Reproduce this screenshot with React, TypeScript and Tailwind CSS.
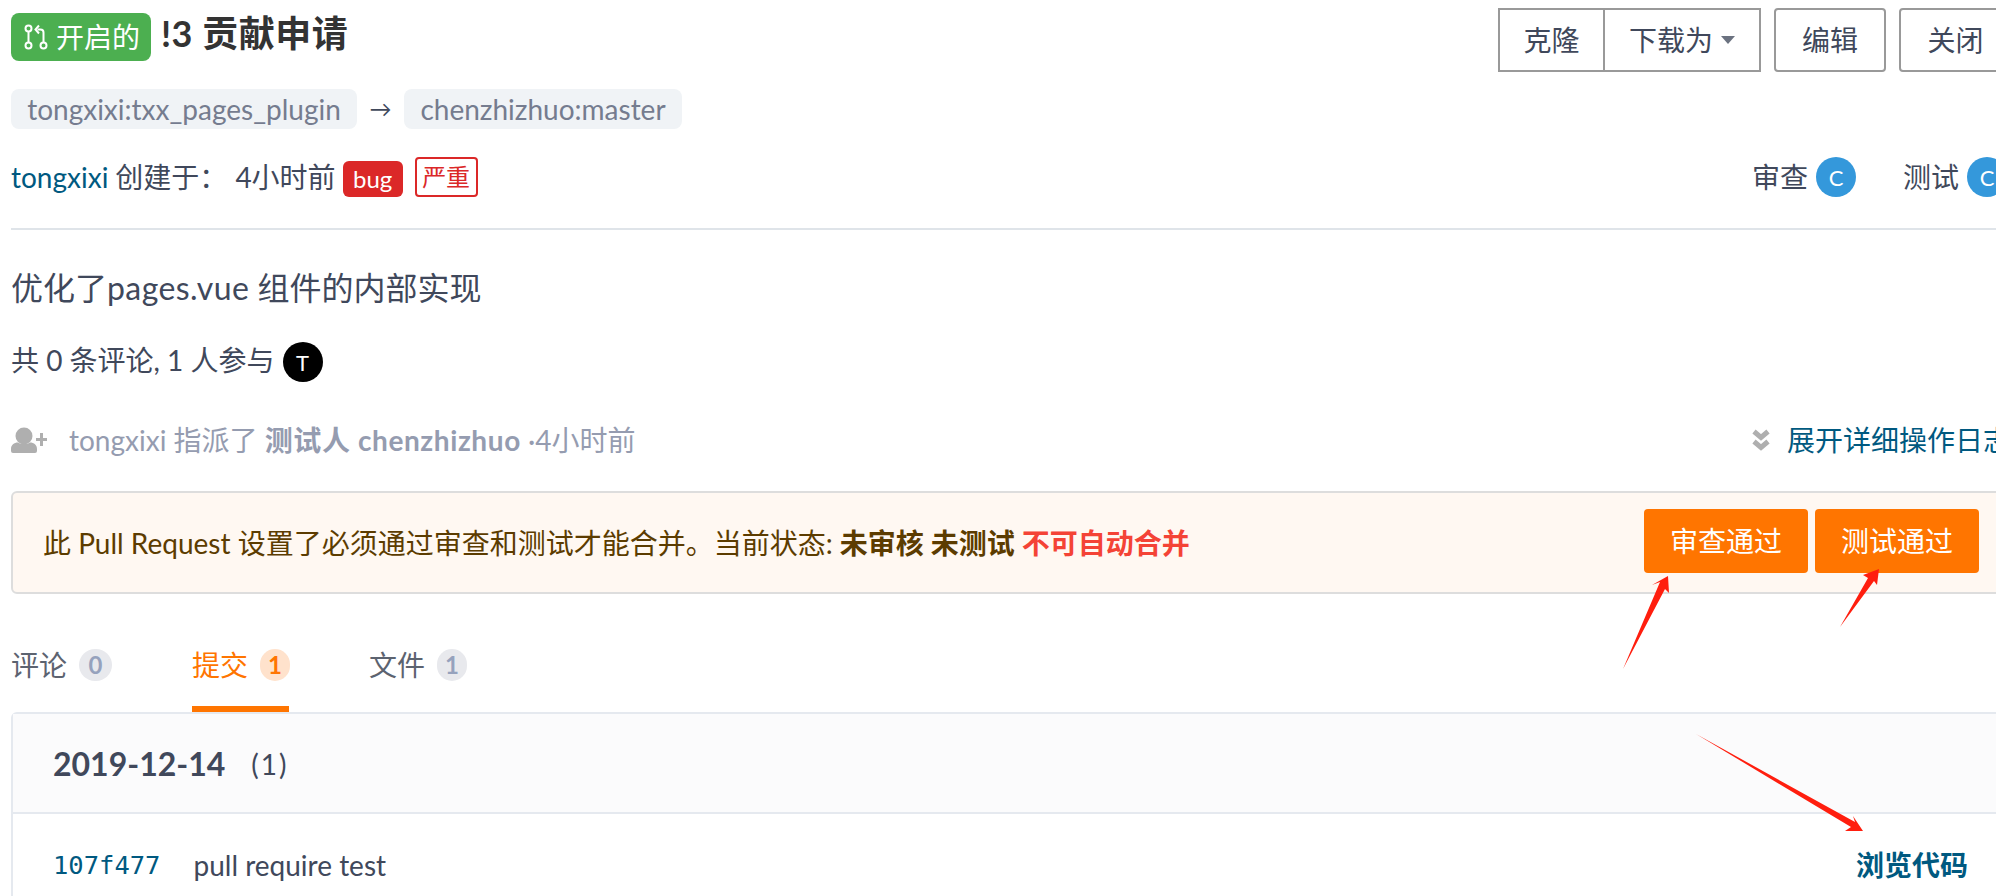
const FONT = "font-['Lato','Noto_Sans_CJK_SC',sans-serif]";

function PullIcon() {
  return (
    <svg viewBox="0 0 24 26" className="w-[24px] h-[26px]" fill="none" stroke="white" strokeWidth="2">
      <circle cx="4.5" cy="4.5" r="3" />
      <circle cx="4.5" cy="21.5" r="3" />
      <circle cx="19.5" cy="21.5" r="3" />
      <path d="M4.5 7.5v11M19.5 18.5V8.5q0-3-3-3h-3" />
      <path d="M15 1.5l-3.5 4 3.5 4" />
    </svg>
  );
}

function UserPlus() {
  return (
    <svg viewBox="0 0 36 26" className="w-[36px] h-[26px]" fill="#afafaf">
      <circle cx="13" cy="9" r="8.5" />
      <path d="M0 22c0-4 3-6.500 7-6.500 3.500 2 8.500 2 12 0 4 0 7 2.500 7 6.500v2q0 2-2 2H2q-2 0-2-2z" />
      <path d="M29 6h3v5h4v3h-4v5h-3v-5h-4v-3h4z" />
    </svg>
  );
}

function Chevrons() {
  return (
    <svg viewBox="0 0 18 22" className="w-[18px] h-[22px]" fill="none" stroke="#afafaf" strokeWidth="5">
      <path d="M2 2.500l7 6 7-6M2 12.500l7 6 7-6" />
    </svg>
  );
}

function Count({ n, active }: { n: number; active?: boolean }) {
  return (
    <span
      className={
        "ml-[12px] h-[32px] px-[8px] rounded-full flex items-center justify-center text-[24px] font-bold leading-none " +
        (n === 0 ? "min-w-[33px] " : "min-w-[30px] ") +
        (active ? "bg-[#ffe2cc] text-[#ff7500]" : "bg-[#e8e9ed] text-[#96a2bd]")
      }
    >
      {n}
    </span>
  );
}

function Arrows() {
  // red annotation arrows painted over the screenshot
  return (
    <svg className="absolute left-0 top-0 w-[1996px] h-[896px] pointer-events-none" viewBox="0 0 1996 896" fill="#ff1e0e">
      <path d="M1668 576L1669 593 1665 589 1623 669 1660 582 1652 585z" />
      <path d="M1879 569L1877 585 1874 581 1840 627 1868 578 1863 575z" />
      <path d="M1696 734L1855 822 1853 816 1863 831 1845 831 1851 827z" />
    </svg>
  );
}

export default function App() {
  return (
    <div className={"relative w-[1996px] h-[896px] overflow-hidden bg-white text-[#40485b] text-[28px] " + FONT}>
      <div className="w-[2040px] pl-[11px] pt-[8px]">
        <div className="flex items-start justify-between">
          <div className="flex items-start mt-[5px]">
            <span className="h-[48px] w-[140px] pl-[2px] rounded-[8px] bg-[#4caf50] text-white flex items-center justify-center gap-[8px]">
              <PullIcon />
              <span className="leading-none">开启的</span>
            </span>
            <h1 className="ml-[10px] text-[36px] font-bold text-[#333333] leading-[40px] tracking-[0.5px]">!3 贡献申请</h1>
          </div>
          <div className="flex items-start">
            <div className="flex h-[64px] border-2 border-[#999999]">
              <span className="w-[103px] flex items-center justify-center">克隆</span>
              <span className="w-[156px] border-l-2 border-[#999999] flex items-center justify-center gap-[8px]">
                下载为
                <span className="w-0 h-0 border-x-[7px] border-x-transparent border-t-[8px] border-t-[#6b7280]" />
              </span>
            </div>
            <span className="ml-[13px] w-[112px] h-[64px] border-2 border-[#999999] rounded-[4px] flex items-center justify-center">编辑</span>
            <span className="ml-[13px] w-[141px] h-[64px] border-2 border-[#999999] rounded-[4px] flex items-center justify-center pr-[28px]">关闭</span>
          </div>
        </div>

        <div className="flex items-center mt-[17px] h-[40px] text-[#757c8f]">
          <span className="h-[40px] w-[346px] bg-[#f0f3f6] rounded-[8px] flex items-center justify-center">tongxixi:txx_pages_plugin</span>
          <span className="w-[47px] text-center text-[#40485b] text-[22px] leading-none">→</span>
          <span className="h-[40px] w-[278px] bg-[#f0f3f6] rounded-[8px] flex items-center justify-center">chenzhizhuo:master</span>
        </div>

        <div className="flex items-center justify-between mt-[28px] h-[40px] pr-[33px]">
          <div className="flex items-center">
            <span className="text-[#005980]">tongxixi</span>
            <span className="ml-[7px]">创建于：</span>
            <span className="ml-[8px]">4小时前</span>
            <span className="ml-[7px] h-[36px] w-[60px] mt-[3px] rounded-[6px] bg-[#db2828] text-white text-[24px] flex items-center justify-center">bug</span>
            <span className="ml-[12px] h-[40px] w-[63px] rounded-[4px] border-2 border-[#db2828] text-[#db2828] text-[24px] flex items-center justify-center">严重</span>
          </div>
          <div className="flex items-center">
            <span>审查</span>
            <span className="ml-[8px] w-[40px] h-[40px] rounded-full bg-[#3498db] text-white text-[22px] flex items-center justify-center">C</span>
            <span className="ml-[47px]">测试</span>
            <span className="ml-[8px] w-[40px] h-[40px] rounded-full bg-[#3498db] text-white text-[22px] flex items-center justify-center">C</span>
          </div>
        </div>

        <div className="mt-[31px] h-[2px] bg-[#dfe4e9]" />

        <p className="mt-[36px] h-[44px] leading-[44px] text-[32px]">
          优化了<span className="tracking-[0.4px]">pages.vue</span> 组件的内部实现
        </p>

        <div className="flex items-center mt-[32px] h-[40px]">
          <span className="mb-[4px]">共 0 条评论, 1 人参与</span>
          <span className="ml-[8px] w-[40px] h-[40px] rounded-full bg-black text-white text-[22px] flex items-center justify-center">T</span>
        </div>

        <div className="flex items-center justify-between mt-[38px] h-[40px] text-[#959cb0]">
          <div className="flex items-center">
            <UserPlus />
            <span className="ml-[22px]">tongxixi 指派了 <b className="tracking-[0.6px]">测试人 chenzhizhuo</b> ·4小时前</span>
          </div>
          <div className="flex items-center w-[288px]">
            <Chevrons />
            <span className="ml-[17px] text-[#005980] whitespace-nowrap">展开详细操作日志</span>
          </div>
        </div>

        <div className="mt-[31px] h-[103px] border-2 border-[#dddddd] rounded-[6px] bg-[#fff8f2] flex items-center justify-between pl-[30px] pr-[59px]">
          <span className="text-[#5c3c00]">
            此 Pull Request 设置了必须通过审查和测试才能合并。当前状态: <b>未审核 未测试</b> <b className="text-[#f44336]">不可自动合并</b>
          </span>
          <div className="flex gap-[7px] mb-[3px]">
            <span className="w-[164px] h-[64px] rounded-[4px] bg-[#ff7500] text-white flex items-center justify-center">审查通过</span>
            <span className="w-[164px] h-[64px] rounded-[4px] bg-[#ff7500] text-white flex items-center justify-center">测试通过</span>
          </div>
        </div>

        <div className="flex mt-[55px] h-[63px]">
          <div className="flex items-start w-[181px]">
            <span className="leading-[32px] text-[#5c6370]">评论</span>
            <Count n={0} />
          </div>
          <div className="flex items-start w-[177px] relative">
            <span className="leading-[32px] text-[#ff7500]">提交</span>
            <Count n={1} active />
            <span className="absolute left-0 bottom-0 w-[97px] h-[6px] bg-[#ff7500]" />
          </div>
          <div className="flex items-start">
            <span className="leading-[32px] text-[#5c6370]">文件</span>
            <Count n={1} />
          </div>
        </div>

        <div className="border-2 border-[#e5e9ef] rounded-tl-[6px]">
          <div className="h-[100px] pt-[2px] bg-[#fbfbfc] border-b-2 border-[#e5e9ef] flex items-center pl-[40px]">
            <span className="font-bold text-[32px]">2019-12-14</span>
            <span className="ml-[26px] text-[28px] tracking-[2px]">(1)</span>
          </div>
          <div className="h-[100px] pt-[2px] flex items-center pl-[40px] pr-[70px] justify-between">
            <div className="flex items-center">
              <span className="text-[#005980] text-[25.5px] font-['DejaVu_Sans_Mono',monospace]">107f477</span>
              <span className="ml-[33px]">pull require test</span>
            </div>
            <span className="font-bold text-[#005980]">浏览代码</span>
          </div>
        </div>
      </div>
      <Arrows />
    </div>
  );
}
